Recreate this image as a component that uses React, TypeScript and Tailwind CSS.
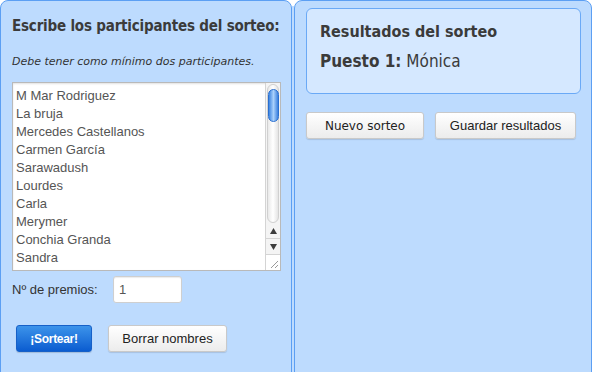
import React from 'react';

const NAMES = [
  'M Mar Rodriguez',
  'La bruja',
  'Mercedes Castellanos',
  'Carmen García',
  'Sarawadush',
  'Lourdes',
  'Carla',
  'Merymer',
  'Conchia Granda',
  'Sandra',
  'Esther',
];

function Scrollbar() {
  return (
    <div className="flex w-[15px] flex-col border-l border-[#d4d4d4] bg-[#f4f4f4]">
      {/* track + thumb */}
      <div className="h-[140px] px-[1px] pt-[1px]">
        <div className="h-full rounded-full border border-[#d0d0d0] bg-gradient-to-r from-[#e9e9e9] via-white to-[#e4e4e4] pt-[4px]">
          <div className="mx-auto h-[33px] w-[11px] rounded-full border border-[#2a6fd0] bg-gradient-to-r from-[#3e86e0] via-[#a9d0fb] to-[#3a80de]" />
        </div>
      </div>
      <div className="flex h-[16px] items-center justify-center border-b border-[#d4d4d4]">
        <svg width="7" height="6" viewBox="0 0 7 6"><polygon points="3.5,0 7,6 0,6" fill="#3c3c3c" /></svg>
      </div>
      <div className="flex h-[16px] items-center justify-center border-b border-[#d4d4d4]">
        <svg width="7" height="6" viewBox="0 0 7 6"><polygon points="0,0 7,0 3.5,6" fill="#3c3c3c" /></svg>
      </div>
      <div className="flex flex-1 items-end justify-end bg-white p-[2px]">
        <svg width="8" height="8" viewBox="0 0 8 8">
          <line x1="8" y1="1" x2="1" y2="8" stroke="#9a9a9a" strokeWidth="1" />
          <line x1="8" y1="5" x2="5" y2="8" stroke="#9a9a9a" strokeWidth="1" />
        </svg>
      </div>
    </div>
  );
}

function GrayButton({ label, w }: { label: string; w: string }) {
  return (
    <button
      className={`h-[27px] ${w} rounded-[3px] border border-[#c9c9c9] bg-gradient-to-b from-white to-[#ececec] text-[13px] text-[#222] shadow-[0_1px_1px_rgba(0,0,0,0.12)]`}
    >
      {label}
    </button>
  );
}

export default function App() {
  return (
    <div className="flex h-[372px] w-[593px] overflow-hidden bg-white font-['Liberation_Sans',Arial,sans-serif]">
      {/* Left panel */}
      <section className="h-[380px] w-[292px] shrink-0 rounded-t-[8px] border border-[#5c9ff3] bg-[#bddbfe] px-[11px]">
        <h1 className="mt-[16px] font-['DejaVu_Sans_Condensed','DejaVu_Sans',sans-serif] text-[15px] font-bold leading-[18px] tracking-[-0.2px] text-[#3b3b3b]">
          Escribe los participantes del sorteo:
        </h1>
        <p className="mt-[20px] font-['DejaVu_Sans',sans-serif] text-[11px] italic leading-[14px] text-[#333]">
          Debe tener como mínimo dos participantes.
        </p>
        <div className="mt-[13px] flex h-[189px] w-[269px] border border-[#b9b9b9] bg-white shadow-[inset_0_1px_2px_rgba(0,0,0,0.12)]">
          <div className="flex-1 overflow-hidden pl-[3px] pt-[4px] text-[13px] leading-[18px] text-[#555]">
            {NAMES.map((n) => (
              <div key={n}>{n}</div>
            ))}
          </div>
          <Scrollbar />
        </div>
        <div className="mt-[5px] flex items-center">
          <span className="w-[101px] text-[13px] text-[#333]">Nº de premios:</span>
          <div className="flex h-[27px] w-[69px] items-center rounded-[3px] border border-[#cfcfcf] bg-white pl-[5px] text-[13px] text-[#555] shadow-[inset_0_1px_1px_rgba(0,0,0,0.08)]">
            1
          </div>
        </div>
        <div className="mt-[22px] flex gap-[16px] pl-[4px]">
          <button className="h-[27px] w-[76px] rounded-[3px] border border-[#1660c8] bg-gradient-to-b from-[#3c93ea] to-[#0a5cd0] text-[12px] font-bold tracking-[-0.3px] text-white shadow-[0_1px_1px_rgba(0,0,0,0.15)]">
            ¡Sortear!
          </button>
          <GrayButton label="Borrar nombres" w="w-[119px]" />
        </div>
      </section>

      <div className="mt-[6px] w-[2px] shrink-0 bg-[#bddbfe]" />

      {/* Right panel */}
      <section className="h-[380px] w-[298px] shrink-0 rounded-t-[8px] border border-[#5c9ff3] bg-[#bddbfe] px-[11px]">
        <div className="mt-[7px] h-[86px] w-[275px] rounded-[6px] border border-[#6aa9f6] bg-[#d5e8ff] px-[13px] pt-[13px] font-['DejaVu_Sans_Condensed','DejaVu_Sans',sans-serif] text-[#3b3b3b]">
          <div className="text-[16px] font-bold leading-[20px]">Resultados del sorteo</div>
          <div className="mt-[9px] text-[17px] leading-[20px]">
            <span className="font-bold">Puesto 1:</span> Mónica
          </div>
        </div>
        <div className="mt-[18px] flex gap-[11px]">
          <button className="h-[27px] w-[118px] rounded-[3px] border border-[#c9c9c9] bg-gradient-to-b from-white to-[#ececec] font-['DejaVu_Sans',sans-serif] text-[12px] text-[#222] shadow-[0_1px_1px_rgba(0,0,0,0.12)]">
            Nuevo sorteo
          </button>
          <GrayButton label="Guardar resultados" w="w-[141px]" />
        </div>
      </section>
    </div>
  );
}
